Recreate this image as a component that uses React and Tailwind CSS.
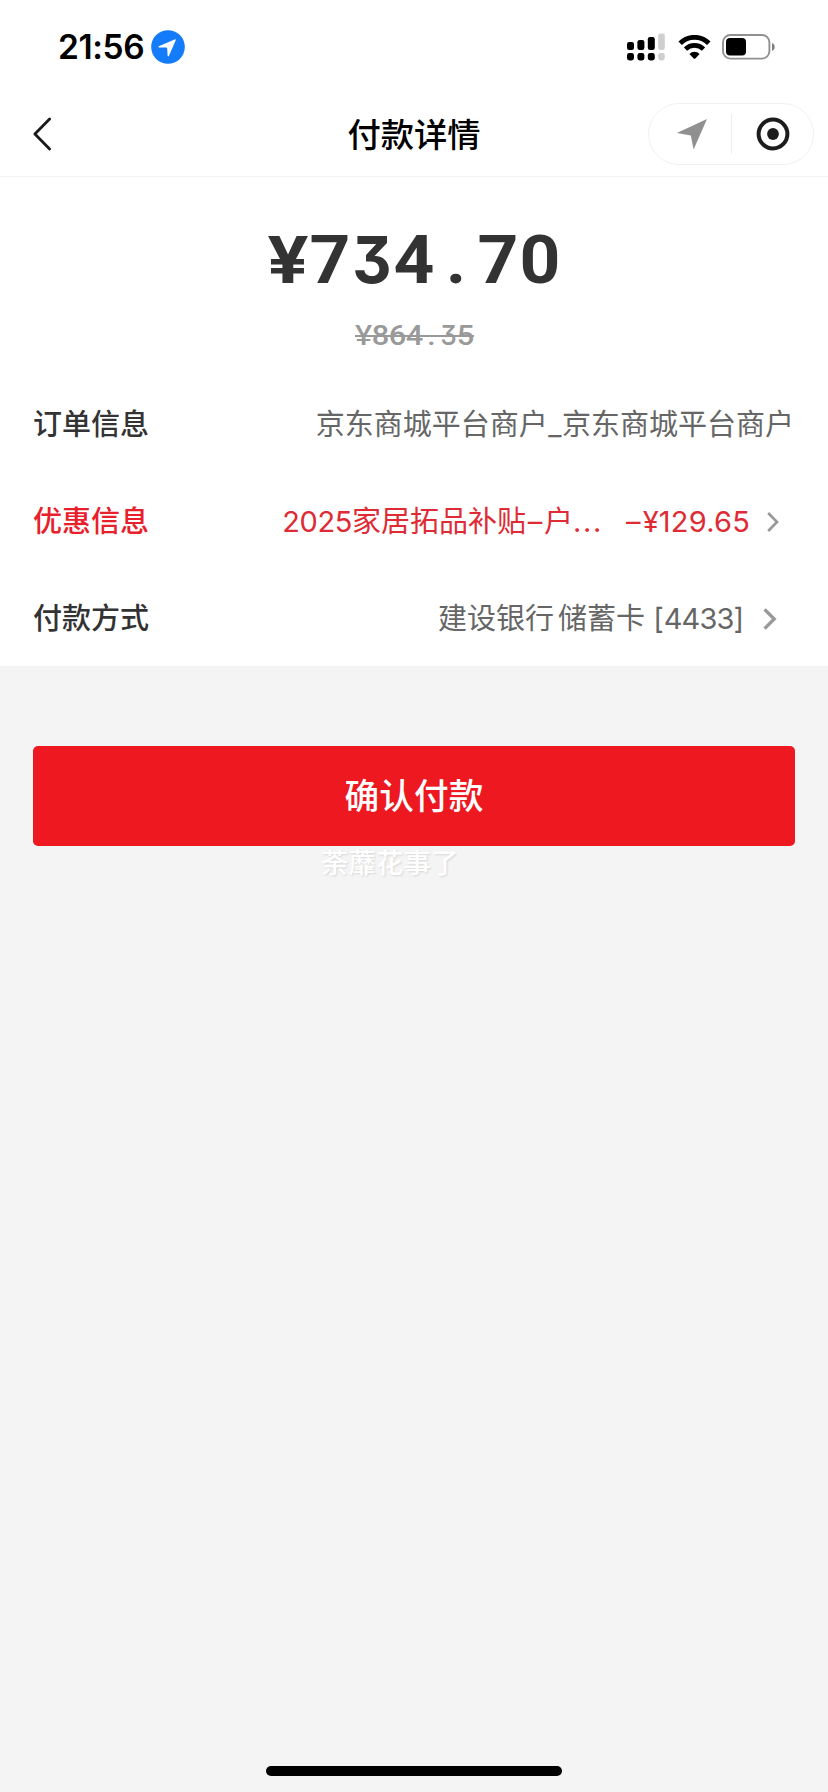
import React from "react";

const Signal = () => (
  <svg width="38" height="28" viewBox="0 0 38 28" className="shrink-0">
    <g fill="#000">
      <rect x="0" y="9" width="7" height="8" rx="2.2" />
      <rect x="10.4" y="7" width="7" height="10" rx="2.2" />
      <rect x="20.8" y="4" width="7" height="13" rx="2.2" />
      <rect x="0" y="20" width="7" height="7.4" rx="2.4" />
      <rect x="10.4" y="20" width="7" height="7.4" rx="2.4" />
      <rect x="20.8" y="20" width="7" height="7.4" rx="2.4" />
    </g>
    <g fill="#cfcfcf">
      <rect x="31.2" y="0.6" width="6.6" height="16.4" rx="2.2" />
      <rect x="31.2" y="20" width="6.6" height="7.4" rx="2.4" />
    </g>
  </svg>
);

const Wifi = () => (
  <svg width="33" height="25" viewBox="0 0 33 25" className="shrink-0">
    <path d="M2.2 8.3 A20 20 0 0 1 30.8 8.3" fill="none" stroke="#000" strokeWidth="4.8" />
    <path d="M7.5 14.2 A12.6 12.6 0 0 1 25.5 14.2" fill="none" stroke="#000" strokeWidth="4.6" />
    <path d="M11.4 18.9 A7.4 7.4 0 0 1 21.6 18.9 L17.3 23.4 Q16.5 24.1 15.7 23.4 Z" fill="#000" />
  </svg>
);

const Battery = () => (
  <svg width="54" height="26" viewBox="0 0 54 26" className="shrink-0">
    <rect x="1" y="1" width="46.4" height="23.6" rx="7.4" fill="none" stroke="#909090" strokeWidth="1.9" />
    <rect x="4" y="4" width="20" height="17.6" rx="4" fill="#000" />
    <path d="M50 8.9 C53.6 10.2 53.6 15.6 50 16.9 Z" fill="#808080" />
  </svg>
);

const StatusBar = () => (
  <div className="h-[94px] flex items-center pl-[58px] pr-[52px]">
    <span className="w-[87px] pt-[2px] text-[33.5px] leading-none font-semibold tracking-[-0.4px] whitespace-nowrap">21:56</span>
    <svg width="34" height="34" viewBox="0 0 34 34" className="ml-[6px] shrink-0">
      <circle cx="17" cy="17" r="16.8" fill="#147cf8" />
      <path d="M7.8 16.2 L23.6 9.4 Q25.4 8.8 24.6 10.6 L17.9 26 Q17 27 16.6 25.6 L16.2 18.6 Q16 17.7 15 17.6 L8 17.4 Q6.6 17 7.8 16.2 Z" fill="#fff" />
    </svg>
    <div className="ml-auto flex items-center">
      <Signal />
      <div className="ml-[13px]"><Wifi /></div>
      <div className="ml-[11px]"><Battery /></div>
    </div>
  </div>
);

const NavBar = () => (
  <div className="h-[83px] grid grid-cols-[1fr_auto_1fr] items-center border-b border-[#f3f3f3] px-[14px] pb-[3px]">
    <svg width="20" height="34" viewBox="0 0 20 34" fill="none" stroke="#1a1a1a" strokeWidth="2.8" strokeLinecap="round" strokeLinejoin="round" className="ml-[19px]">
      <path d="M16.6 2 L1.9 17 L16.6 32" />
    </svg>
    <h1 className="pt-[4px] text-[33.3px] leading-none font-medium text-black">付款详情</h1>
    <div className="justify-self-end w-[166px] h-[62px] rounded-full border border-[#f1f1f1] flex items-center">
      <div className="flex-1 flex justify-center">
        <svg width="32" height="32" viewBox="0 0 32 32" className="ml-[5px]">
          <path d="M31 1 L17.6 31.4 L14.8 17.4 L0.8 15 Z" fill="#909090" />
        </svg>
      </div>
      <div className="w-px h-10 bg-[#ededed]"></div>
      <div className="flex-1 flex justify-center">
        <svg width="34" height="34" viewBox="0 0 34 34" className="ml-[2px]">
          <circle cx="17" cy="17" r="14.4" fill="none" stroke="#1c1c1c" strokeWidth="4" />
          <circle cx="17" cy="17" r="5.9" fill="#1c1c1c" />
        </svg>
      </div>
    </div>
  </div>
);

const Row = ({ label, labelClass = "text-[#333]", children }) => (
  <div className="h-[97px] pt-[2px] flex items-center justify-between text-[29px] leading-none whitespace-nowrap">
    <span className={`font-medium ${labelClass}`}>{label}</span>
    {children}
  </div>
);

const PRICE = "¥734.70";
const OLD_PRICE = "¥864.35";

// the flat-topped 3 comes from Inter, the other digits are widened Roboto
const glyphClass = (c) => {
  if (c === "3") return "font-['Inter'] [font-feature-settings:'cv09'] text-[0.97em] scale-x-95";
  if (c === "¥") return "font-['Inter'] text-[0.97em] scale-x-115";
  if (c === ".") return "scale-x-105";
  return "scale-x-108";
};

const Price = ({ value, cell, className }) => (
  <div className={`flex items-baseline ${className}`}>
    {value.split("").map((c, i) => (
      <span key={i} className={`${cell} flex justify-center ${glyphClass(c)}`}>{c}</span>
    ))}
  </div>
);

const App = () => {
  return (
    <div className="w-[828px] h-[1792px] bg-[#f4f4f4] flex flex-col overflow-hidden text-black font-['Inter','Noto_Sans_CJK_SC',sans-serif]">
      <div className="bg-white">
        <StatusBar />
        <NavBar />

        {/* Amount */}
        <div className="h-[198px] pt-[50px] flex flex-col items-center font-['Roboto',sans-serif]">
          <Price value={PRICE} cell="w-[42px]" className="h-[66px] text-[66px] leading-[66px] font-bold text-[#333]" />
          <div className="relative mt-[27px]">
            <Price value={OLD_PRICE} cell="w-[17px]" className="h-[30px] text-[28.5px] leading-[30px] font-medium text-[#999]" />
            <div className="absolute left-0 right-0 top-[15px] h-[2px] bg-[#999]"></div>
          </div>
        </div>

        {/* Order rows */}
        <div className="pl-[33px] pr-[34px]">
          <Row label="订单信息">
            <span className="text-[#666]">京东商城平台商户<span className="mx-[0.5px]">_</span>京东商城平台商户</span>
          </Row>
          <Row label="优惠信息" labelClass="text-[#e8202b]">
            <div className="flex items-center text-[#de2b35]">
              <span><span className="tracking-[-0.4px]">2025</span>家居拓品补贴<span className="mx-[1.8px]">–</span>户<span className="tracking-[1.6px]">...</span></span>
              <span className="ml-[23px] tracking-[0.2px]"><span className="mr-[2px]">–</span>¥129.65</span>
              <svg width="12" height="20" viewBox="0 0 12 20" fill="none" stroke="#999" strokeWidth="2.7" className="ml-[17px] mr-[15px]">
                <path d="M1.2 1 L10 10 L1.2 19" />
              </svg>
            </div>
          </Row>
          <Row label="付款方式">
            <div className="flex items-center text-[#666]">
              <span>建设银行</span>
              <span className="ml-[4px]">储蓄卡 [<span className="tracking-[-0.9px]">4433</span>]</span>
              <svg width="14" height="22" viewBox="0 0 14 22" fill="none" stroke="#999" strokeWidth="3.4" className="ml-[19px] mr-[17px]">
                <path d="M1.6 1.4 L11.2 11 L1.6 20.6" />
              </svg>
            </div>
          </Row>
        </div>
      </div>

      <button className="mx-[33px] mt-[80px] h-[100px] shrink-0 rounded-[5px] bg-[#ed1820] text-white text-[34.7px] leading-none font-medium">
        确认付款
      </button>
      <div className="pl-[321px] text-[27.5px] leading-[34px] font-medium text-white [text-shadow:1px_1px_2px_rgba(0,0,0,0.12)]">荼蘼花事了</div>

      {/* Home indicator */}
      <div className="mt-auto mb-[16px] mx-auto w-[296px] h-[10px] rounded-full bg-black"></div>
    </div>
  );
};

export default App;
